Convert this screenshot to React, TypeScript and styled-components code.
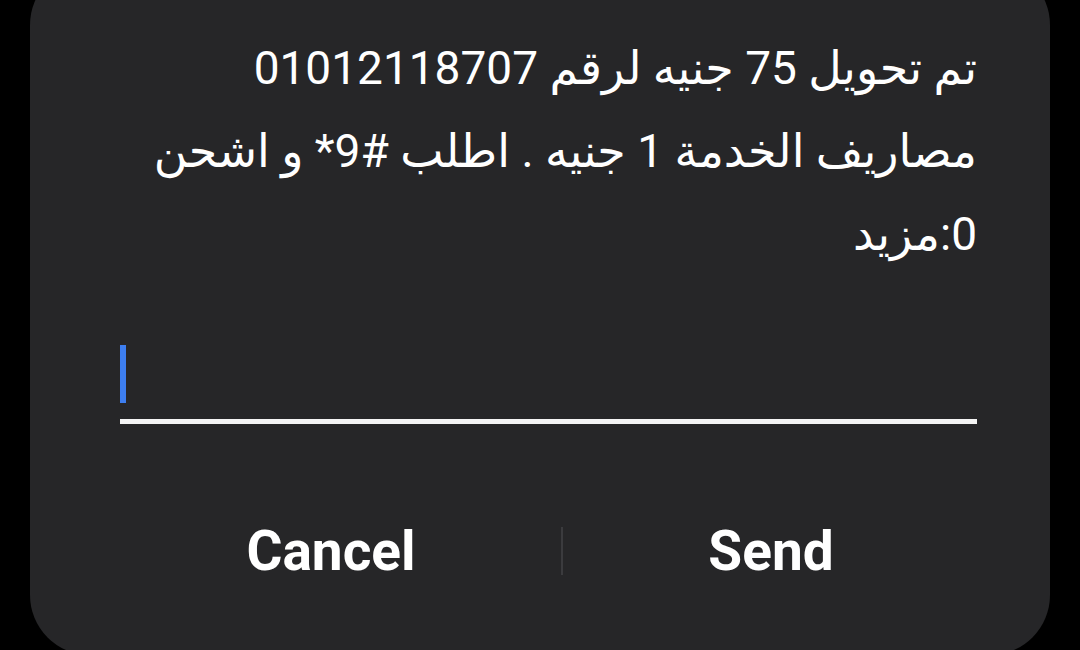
import { createGlobalStyle, styled } from "styled-components";

const GlobalStyle = createGlobalStyle`
  html, body {
    margin: 0;
    padding: 0;
    background: #000;
    overflow: hidden;
  }
  body {
    width: 1080px;
    height: 650px;
    font-family: Roboto, "DejaVu Sans", sans-serif;
  }
`;

const Screen = styled.div`
  width: 1080px;
  height: 650px;
  display: flex;
  justify-content: center;
  overflow: hidden;
`;

const Dialog = styled.div`
  box-sizing: border-box;
  width: 1020px;
  height: 690px;
  margin-top: -35px;
  background: #262628;
  border-radius: 60px;
  padding: 62px 73px 0 90px;
  display: flex;
  flex-direction: column;
`;

const Message = styled.div`
  direction: rtl;
  text-align: right;
  color: #fff;
  font-size: 46px;
  line-height: 83px;
`;

const Line = styled.div`
  white-space: nowrap;
`;

const InputField = styled.div`
  margin-top: 68px;
  height: 74px;
  border-bottom: 5px solid #f4f4f4;
  display: flex;
  align-items: flex-start;
  padding-top: 1px;
`;

const Caret = styled.span`
  display: block;
  width: 6px;
  height: 58px;
  background: #3d7ef0;
`;

const Actions = styled.div`
  margin: 92px -2px 0 -19px;
  display: grid;
  grid-template-columns: 460px 2px 1fr;
  align-items: center;
`;

const ActionButton = styled.button`
  background: none;
  border: none;
  color: #fff;
  font-family: Roboto, "Liberation Sans", sans-serif;
  font-weight: 700;
  font-size: 55px;
  padding: 0;
  height: 70px;
  cursor: pointer;
`;

const Divider = styled.span`
  width: 2px;
  height: 48px;
  background: #3b3b3e;
`;

export default function App() {
  return (
    <>
      <GlobalStyle />
      <Screen>
        <Dialog>
          <Message>
            <Line>تم تحويل 75 جنيه لرقم 01012118707</Line>
            <Line>مصاريف الخدمة 1 جنيه . اطلب #9* و اشحن</Line>
            <Line>0:مزيد</Line>
          </Message>
          <InputField>
            <Caret />
          </InputField>
          <Actions>
            <ActionButton>Cancel</ActionButton>
            <Divider />
            <ActionButton>Send</ActionButton>
          </Actions>
        </Dialog>
      </Screen>
    </>
  );
}
